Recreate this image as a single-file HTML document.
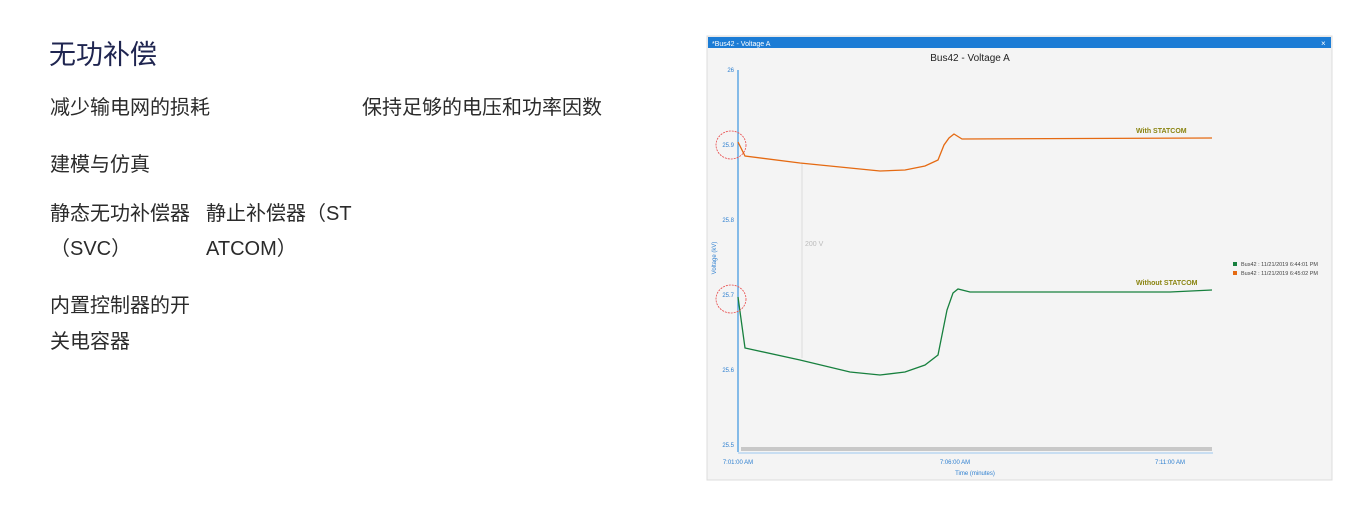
<!DOCTYPE html>
<html><head><meta charset="utf-8"><style>
body{margin:0;width:1352px;height:506px;background:#fff;position:relative;overflow:hidden;font-family:"Liberation Sans","Noto Sans CJK SC",sans-serif;}
.t{position:absolute;white-space:nowrap;color:#2b2b2b;font-size:20px;line-height:20px;}
</style></head><body>
<div class="t" style="left:49px;top:41px;font-size:27px;line-height:28px;color:#1f2550">无功补偿</div>
<div class="t" style="left:50px;top:98px">减少输电网的损耗</div>
<div class="t" style="left:362px;top:98px">保持足够的电压和功率因数</div>
<div class="t" style="left:50px;top:155px">建模与仿真</div>
<div class="t" style="left:50px;top:204px">静态无功补偿器</div>
<div class="t" style="left:50px;top:239px">（SVC）</div>
<div class="t" style="left:206px;top:204px">静止补偿器（ST</div>
<div class="t" style="left:206px;top:239px">ATCOM）</div>
<div class="t" style="left:50px;top:296px">内置控制器的开</div>
<div class="t" style="left:50px;top:332px">关电容器</div>

<svg style="position:absolute;left:0;top:0" width="1352" height="506" font-family="Liberation Sans, sans-serif">
<rect x="707" y="36" width="625" height="444" fill="#f4f4f4" stroke="#dcdcdc"/>
<rect x="708" y="37" width="623" height="11" fill="#1c7cd5"/>
<text x="712" y="46" font-size="7" fill="#fff">*Bus42 - Voltage A</text>
<text x="1321" y="46" font-size="8" fill="#fff">×</text>
<text x="970" y="61" font-size="10" fill="#222" text-anchor="middle">Bus42 - Voltage A</text>
<line x1="738" y1="70" x2="738" y2="452" stroke="#3a95e0" stroke-width="1.2"/>
<g font-size="6" fill="#2d7fd0" text-anchor="end">
<text x="734" y="72">26</text><text x="734" y="147">25.9</text><text x="734" y="222">25.8</text>
<text x="734" y="297">25.7</text><text x="734" y="372">25.6</text><text x="734" y="447">25.5</text>
</g>
<text transform="translate(716,258) rotate(-90)" font-size="6" fill="#2d7fd0" text-anchor="middle">Voltage (kV)</text>
<line x1="802" y1="163" x2="802" y2="358" stroke="#ddd"/>
<text x="805" y="246" font-size="7" fill="#bbb">200 V</text>
<path d="M738,142 L745,156 L800,163 L850,168 L880,171 L905,170 L925,166 L938,160 L944,145 L949,138 L954,134 L962,139 L1212,138" fill="none" stroke="#e56a12" stroke-width="1.3"/>
<path d="M738,297 L745,348 L800,360 L850,372 L880,375 L905,372 L925,365 L938,355 L947,310 L953,293 L958,289 L970,292 L1170,292 L1212,290" fill="none" stroke="#17803e" stroke-width="1.3"/>
<text x="1136" y="133" font-size="7" font-weight="bold" fill="#8a8410">With STATCOM</text>
<text x="1136" y="285" font-size="7" font-weight="bold" fill="#8a8410">Without STATCOM</text>
<ellipse cx="731" cy="145" rx="15" ry="14" fill="none" stroke="#e84a4a" stroke-width="0.8" stroke-dasharray="2,1"/>
<ellipse cx="731" cy="299" rx="15" ry="14" fill="none" stroke="#e84a4a" stroke-width="0.8" stroke-dasharray="2,1"/>
<rect x="741" y="447" width="471" height="4" fill="#c8c8c8"/>
<line x1="738" y1="453" x2="1213" y2="453" stroke="#9cc8ef"/>
<g font-size="6" fill="#2d7fd0" text-anchor="middle">
<text x="738" y="464">7:01:00 AM</text><text x="955" y="464">7:06:00 AM</text><text x="1170" y="464">7:11:00 AM</text>
<text x="975" y="475">Time (minutes)</text>
</g>
<rect x="1233" y="262" width="4" height="4" fill="#17803e"/>
<rect x="1233" y="271" width="4" height="4" fill="#e56a12"/>
<text x="1241" y="266" font-size="5.5" fill="#444">Bus42 : 11/21/2019 6:44:01 PM</text>
<text x="1241" y="275" font-size="5.5" fill="#444">Bus42 : 11/21/2019 6:45:02 PM</text>
</svg>
</body></html>
